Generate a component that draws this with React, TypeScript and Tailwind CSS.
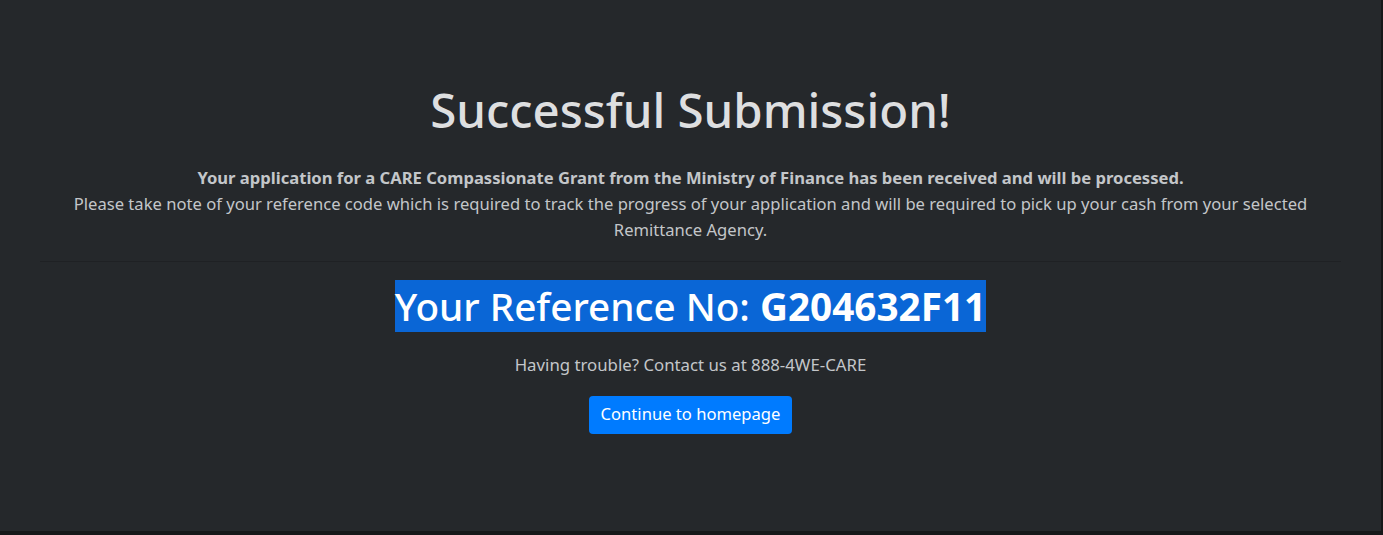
export default function App() {
  return (
    <div className="min-h-[535px] w-full bg-[#161819]" style={{ fontFamily: '"Noto Sans", "Open Sans", sans-serif' }}>
      <div className="h-[531px] w-[1381px] bg-[#25282b] px-10 pt-[82px] text-center">
        <h1 className="text-[47.4px] font-medium leading-[1.2] text-[#dedfe0]">Successful Submission!</h1>
        <div className="mt-[26px] text-[16.6px] leading-[26px] text-[#c3c6c9]">
          <p className="font-bold">
            Your application for a CARE Compassionate Grant from the Ministry of Finance has been received and will be processed.
          </p>
          <p>
            Please take note of your reference code which is required to track the progress of your application and will be
            required to pick up your cash from your selected Remittance Agency.
          </p>
        </div>
        <hr className="mt-[18px] border-t border-[#1f2124]" />
        <div className="mt-[18px] flex justify-center">
          <h2 className="bg-[#0a66d6] text-[38.7px] font-medium leading-[52px] text-white">
            Your Reference No: <span className="font-bold">G204632F11</span>
          </h2>
        </div>
        <p className="mt-[21px] text-[16.8px] leading-6 text-[#c3c6c9]">Having trouble? Contact us at 888-4WE-CARE</p>
        <div className="mt-[19px] flex justify-center">
          <button className="h-[38px] rounded bg-[#007bff] px-3 text-[16.6px] text-white">Continue to homepage</button>
        </div>
      </div>
    </div>
  );
}
